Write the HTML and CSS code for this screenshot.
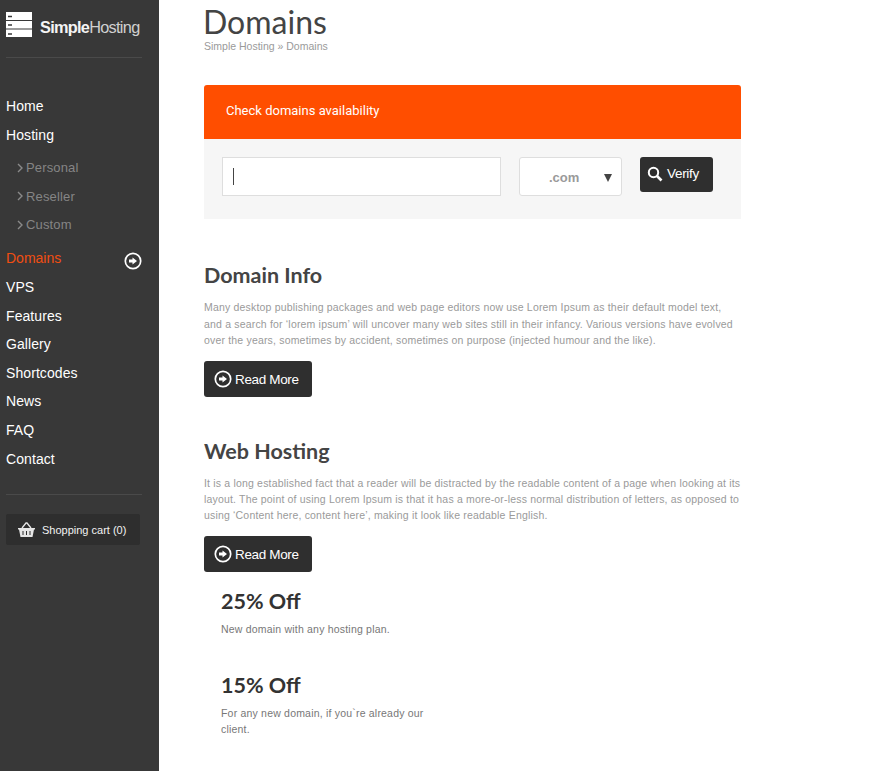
FILE: index.html
```html
<!DOCTYPE html>
<html lang="en">
<head>
<meta charset="utf-8">
<title>Domains</title>
<link rel="stylesheet" href="styles.css">
</head>
<body>
<div class="layout">
<aside class="sidebar">
  <div class="logo">
    <svg class="logo-icon" width="26" height="25" viewBox="0 0 26 25"><rect width="26" height="25" fill="#fff"/><path d="M0 8.500h26M0 17h26" stroke="#383838" stroke-width="1.200"/><path d="M2 4.500h4M2 13h4M2 22h4" stroke="#383838" stroke-width="1.500"/></svg>
    <span class="logo-text"><b>Simple</b>Hosting</span>
  </div>
  <hr class="rule rule-top">
  <nav class="menu">
    <a class="item">Home</a>
    <a class="item">Hosting</a>
    <div class="submenu">
      <a class="subitem"><svg width="6" height="10" viewBox="0 0 6 10"><path d="M1 1l4 4-4 4" fill="none" stroke="#8a8a8a" stroke-width="1.400"/></svg>Personal</a>
      <a class="subitem"><svg width="6" height="10" viewBox="0 0 6 10"><path d="M1 1l4 4-4 4" fill="none" stroke="#8a8a8a" stroke-width="1.400"/></svg>Reseller</a>
      <a class="subitem"><svg width="6" height="10" viewBox="0 0 6 10"><path d="M1 1l4 4-4 4" fill="none" stroke="#8a8a8a" stroke-width="1.400"/></svg>Custom</a>
    </div>
    <a class="item active">Domains<svg class="active-icon" width="18" height="18" viewBox="0 0 18 18"><circle cx="9" cy="9" r="7.700" fill="none" stroke="#fff" stroke-width="1.700"/><path d="M5 7.500h3.500V5.500l4.500 3.500-4.500 3.500v-2H5z" fill="#fff"/></svg></a>
    <a class="item">VPS</a>
    <a class="item">Features</a>
    <a class="item">Gallery</a>
    <a class="item">Shortcodes</a>
    <a class="item">News</a>
    <a class="item">FAQ</a>
    <a class="item">Contact</a>
  </nav>
  <hr class="rule rule-bottom">
  <div class="cart">
    <svg width="17" height="15" viewBox="0 0 17 15"><path d="M4 6l4-5h1l4 5" fill="none" stroke="#e6e6e6" stroke-width="1.300"/><path d="M0 6h17v1.500h-1L14.500 15h-12L1 7.500H0z" fill="#e6e6e6"/><path d="M5 9v4M8.500 9v4M12 9v4" stroke="#2d2d2d"/></svg>
    <span>Shopping cart (0)</span>
  </div>
</aside>
<main class="content">
  <h1 class="title">Domains</h1>
  <div class="crumbs">Simple Hosting » Domains</div>
  <section class="checker">
    <div class="checker-head">Check domains availability</div>
    <div class="checker-body">
      <div class="field"><span class="caret"></span></div>
      <div class="select"><span class="tld">.com</span><span class="arrow"></span></div>
      <button class="btn btn-verify"><svg width="16" height="16" viewBox="0 0 16 16"><circle cx="6.500" cy="6.500" r="4.700" fill="none" stroke="#fff" stroke-width="2"/><path d="M10 10l4.500 4.500" stroke="#fff" stroke-width="2.600"/></svg>Verify</button>
    </div>
  </section>
  <section class="info info-first">
    <h2>Domain Info</h2>
    <p>Many desktop publishing packages and web page editors now use Lorem Ipsum as their default model text,<br>and a search for ‘lorem ipsum’ will uncover many web sites still in their infancy. Various versions have evolved<br>over the years, sometimes by accident, sometimes on purpose (injected humour and the like).</p>
    <button class="btn btn-more"><svg width="18" height="18" viewBox="0 0 18 18"><circle cx="9" cy="9" r="7.700" fill="none" stroke="#fff" stroke-width="1.700"/><path d="M5 7.500h3.500V5.500l4.500 3.500-4.500 3.500v-2H5z" fill="#fff"/></svg>Read More</button>
  </section>
  <section class="info info-second">
    <h2>Web Hosting</h2>
    <p>It is a long established fact that a reader will be distracted by the readable content of a page when looking at its<br>layout. The point of using Lorem Ipsum is that it has a more-or-less normal distribution of letters, as opposed to<br>using ‘Content here, content here’, making it look like readable English.</p>
    <button class="btn btn-more"><svg width="18" height="18" viewBox="0 0 18 18"><circle cx="9" cy="9" r="7.700" fill="none" stroke="#fff" stroke-width="1.700"/><path d="M5 7.500h3.500V5.500l4.500 3.500-4.500 3.500v-2H5z" fill="#fff"/></svg>Read More</button>
  </section>
  <section class="offers">
    <div class="offer">
      <h3>25% Off</h3>
      <p>New domain with any hosting plan.</p>
    </div>
    <div class="offer">
      <h3>15% Off</h3>
      <p>For any new domain, if you`re already our client.</p>
    </div>
  </section>
</main>
</div>
</body>
</html>
```
FILE: styles.css
```css
* { box-sizing: border-box; }
html, body { margin: 0; padding: 0; height: 100%; overflow: hidden; background: #fff; }
body { font-family: "Liberation Sans", Arial, sans-serif; color: #444; }
.layout { display: flex; height: 771px; }
.sidebar { width: 159px; flex: none; background: #383838; padding: 12px 17px 0 6px; }
.logo { display: flex; height: 25px; gap: 8px; }
.logo-icon { display: block; flex: none; }
.logo-text { font-size: 16.300px; line-height: 30px; color: #d0d0d0; letter-spacing: -0.700px; white-space: nowrap; font-weight: 400; }
.logo-text b { color: #f4f4f4; font-weight: 700; }
.rule { border: 0; height: 1px; background: #4a4a4a; margin: 0; }
.rule-top { margin-top: 20px; }
.menu { margin-top: 30px; display: flex; flex-direction: column; }
.item { position: relative; height: 28.670px; line-height: 36px; display: block; font-size: 14px; letter-spacing: 0.080px; color: #fff; white-space: nowrap; }
.item.active { color: #f04e12; letter-spacing: 0; }
.active-icon { position: absolute; left: 118px; top: 12px; }
.submenu { padding: 5px 0 4.400px 11px; display: flex; flex-direction: column; }
.subitem { display: flex; align-items: center; gap: 3px; height: 28.500px; padding-top: 6px; font-size: 13px; letter-spacing: 0.150px; color: #858585; }
.rule-bottom { margin-top: 24.600px; }
.cart { margin-top: 19px; width: 134px; height: 31px; background: #2e2e2e; border-radius: 2px; display: flex; align-items: center; gap: 7px; padding-left: 12px; font-size: 11px; color: #f2f2f2; white-space: nowrap; }
.cart svg { flex: none; }
.content { flex: none; width: 537px; margin-left: 45px; }
.title { margin: 4px 0 0 -1px; font-family: Lato, sans-serif; font-weight: 400; font-size: 32px; line-height: 36px; color: #444; }
.crumbs { font-size: 10.500px; line-height: 12px; color: #9a9a9a; }
.checker { margin-top: 33px; }
.checker-head { height: 54px; background: #ff4e00; border-radius: 3px 3px 0 0; color: #fff; font-family: Roboto, sans-serif; font-size: 13px; line-height: 52px; padding-left: 22px; }
.checker-body { height: 80px; background: #f6f6f6; display: flex; padding: 18px 0 0 18px; }
.field { width: 279px; height: 39px; background: #fff; border: 1px solid #dedede; padding: 10px 0 0 10px; }
.caret { display: block; width: 1px; height: 17px; background: #444; }
.select { position: relative; width: 103px; height: 39px; margin-left: 18px; background: #fff; border: 1px solid #dedede; border-radius: 3px; font-size: 13px; font-weight: 700; color: #9a9a9a; line-height: 39px; padding-left: 29px; }
.arrow { position: absolute; right: 9px; top: 16px; width: 0; height: 0; border-left: 4.500px solid transparent; border-right: 4.500px solid transparent; border-top: 8px solid #444; }
.btn { display: flex; align-items: center; border: 0; padding: 0; margin: 0; background: #2f2f2f; color: #fff; border-radius: 3px; font-family: "Liberation Sans", Arial, sans-serif; font-size: 14px; }
.btn-verify { width: 73px; height: 35px; margin-left: 18px; padding: 0 0 2px 7px; gap: 4px; font-size: 13.500px; letter-spacing: -0.300px; }
.btn-more { width: 108px; height: 36px; padding-left: 10px; gap: 3px; margin-top: 12px; font-size: 13.500px; letter-spacing: -0.350px; }
.info h2 { margin: 0; font-family: Lato, sans-serif; font-weight: 700; font-size: 21.500px; line-height: 24px; color: #444; }
.info p { margin: 12px 0 0; font-size: 10.500px; line-height: 16.500px; color: #9a9a9a; white-space: nowrap; letter-spacing: 0.180px; }
.info-first { margin-top: 44px; }
.info-first .btn-more { margin-top: 12.500px; }
.info-second { margin-top: 42px; }
.info-second p { line-height: 16px; }
.info-second .btn-more { margin-top: 13px; }
.offers { padding-left: 17px; margin-top: 16px; }
.offer { width: 220px; height: 84px; }
.offer h3 { margin: 0; font-family: Lato, sans-serif; font-weight: 700; font-size: 21.500px; line-height: 26px; color: #333; }
.offer p { margin: 7px 0 0; font-size: 10.500px; line-height: 16px; letter-spacing: 0.200px; color: #777; }
```
